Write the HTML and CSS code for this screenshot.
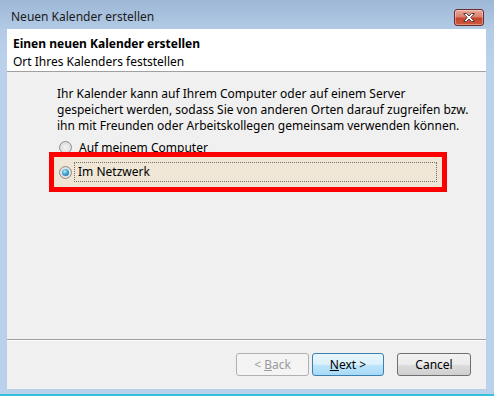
FILE: index.html
```html
<!DOCTYPE html>
<html lang="de">
<head>
    <meta charset="UTF-8">
    <meta name="viewport" content="width=device-width, initial-scale=1.0">
    <title>Neuen Kalender erstellen</title>
    <link rel="stylesheet" href="styles.css">
</head>
<body>
    <div class="window">
        <div class="titlebar">
            <span class="window-title">Neuen Kalender erstellen</span>
            <button class="close-button" aria-label="Schließen">
                <svg width="12" height="9" viewBox="0 0 12 9">
                    <path d="M0.5 0.5 H3.5 L6 3 L8.5 0.5 H11.5 L7.8 4.5 L11.5 8.5 H8.5 L6 6 L3.5 8.5 H0.5 L4.2 4.5 Z" fill="#ffffff" stroke="#5a3a3a" stroke-width="1" stroke-linejoin="round"/>
                </svg>
            </button>
        </div>

        <div class="client">
            <div class="wizard-header">
                <div class="wizard-title">Einen neuen Kalender erstellen</div>
                <div class="wizard-subtitle">Ort Ihres Kalenders feststellen</div>
            </div>

            <div class="wizard-page">
                <p class="intro">
                    Ihr Kalender kann auf Ihrem Computer oder auf einem Server<br>
                    gespeichert werden, sodass Sie von anderen Orten darauf zugreifen bzw.<br>
                    ihn mit Freunden oder Arbeitskollegen gemeinsam verwenden können.
                </p>

                <label class="radio-row">
                    <span class="radio"></span>
                    <span class="radio-label">Auf meinem Computer</span>
                </label>
                <!-- highlighted option -->
                <label class="radio-row highlighted">
                    <span class="radio checked"></span>
                    <span class="radio-label focused">Im Netzwerk</span>
                </label>
            </div>

            <div class="wizard-footer">
                <button class="wizard-button" disabled>&lt; <u>B</u>ack</button>
                <button class="wizard-button default-button"><u>N</u>ext &gt;</button>
                <button class="wizard-button cancel-button">Cancel</button>
            </div>
        </div>
        <div class="bottom-edge"></div>
    </div>
</body>
</html>
```

FILE: styles.css
```css
body {
    margin: 0;
    padding: 0;
    background-color: #b9d1ea;
    font-family: 'Noto Sans', 'Open Sans', sans-serif;
    font-size: 12px;
    color: #000000;
}

.window {
    width: 494px;
    height: 396px;
    display: flex;
    flex-direction: column;
    background: linear-gradient(to bottom, #9db7d5 0px, #b3cbe6 30px, #b9d1ea 60px);
    overflow: hidden;
}

.titlebar {
    height: 29px;
    display: flex;
    align-items: flex-start;
    justify-content: space-between;
    padding: 0 10px 0 11px;
    box-sizing: border-box;
}

.window-title {
    margin-top: 9px;
    line-height: 16px;
    color: #1a1a1a;
}

/* Win7 red close button */
.close-button {
    margin-top: 9px;
    width: 30px;
    height: 17px;
    padding: 0;
    border: 1px solid #6b2c2c;
    border-radius: 3px;
    background: linear-gradient(to bottom, #e9a99b 0%, #d98172 45%, #c5442f 55%, #cf5a3e 100%);
    box-shadow: inset 0 0 0 1px rgba(255, 255, 255, 0.35);
    display: flex;
    align-items: center;
    justify-content: center;
}

.client {
    flex: 1;
    margin: 0 8px 0 7px;
    background-color: #f0f0f0;
    display: flex;
    flex-direction: column;
}

.wizard-header {
    height: 36px;
    background-color: #ffffff;
    border-bottom: 1px solid #a0a0a0;
    padding: 6px 0 0 6px;
    line-height: 18px;
}

.wizard-title {
    font-weight: bold;
}

.wizard-page {
    flex: 1;
    padding: 14px 0 0 50px;
}

.intro {
    margin: 0 0 3px 0;
    line-height: 16px;
}

.radio-row {
    display: flex;
    align-items: center;
    height: 20px;
    margin-left: 2px;
}

.radio-row.highlighted {
    margin-left: -3px;
    padding-left: 5px;
    width: 383px;
    height: 30px;
    background-color: #efe6d6;
    outline: 5px solid #ff0000;
}

.radio {
    width: 11px;
    height: 11px;
    border: 1px solid #8e8f8f;
    border-radius: 50%;
    background: radial-gradient(circle at 50% 50%, #f4f4f4 0%, #e2e2e2 55%, #d0d0d0 100%);
    margin-right: 7px;
    flex-shrink: 0;
    display: flex;
    align-items: center;
    justify-content: center;
}

.radio.checked::after {
    content: "";
    width: 7px;
    height: 7px;
    border-radius: 50%;
    background: radial-gradient(circle at 40% 35%, #b8ecfa 0%, #3fa7d3 45%, #0e5f86 100%);
}

.focused {
    border: 1px dotted #6f6f6f;
    flex: 1;
    line-height: 16px;
    padding: 1px 2px 1px 3px;
    margin-left: -5px;
    margin-right: 5px;
}

.wizard-footer {
    height: 50px;
    border-top: 1px solid #a0a0a0;
    box-shadow: inset 0 1px 0 #ffffff;
    display: flex;
    justify-content: flex-end;
    align-items: flex-start;
    padding: 13px 15px 0 0;
    box-sizing: border-box;
}

.wizard-button {
    font-family: inherit;
    font-size: 12px;
    width: 73px;
    height: 23px;
    padding: 0;
    border: 1px solid #707070;
    border-radius: 3px;
    background: linear-gradient(to bottom, #f2f2f2 0%, #ebebeb 50%, #dddddd 51%, #cfcfcf 100%);
    color: #000000;
}

.wizard-button:disabled {
    border-color: #adb2b5;
    background: #f4f4f4;
    color: #9a9a9a;
}

.default-button {
    margin-left: 3px;
    width: 72px;
    border-color: #3c7fb1;
    background: linear-gradient(to bottom, #eaf6fd 0%, #d9f0fc 50%, #bee6fd 51%, #a7d9f5 100%);
}

.cancel-button {
    margin-left: 13px;
    width: 74px;
}

.bottom-edge {
    height: 2px;
    margin-top: 5px;
    background-color: #36c0dd;
}
```
